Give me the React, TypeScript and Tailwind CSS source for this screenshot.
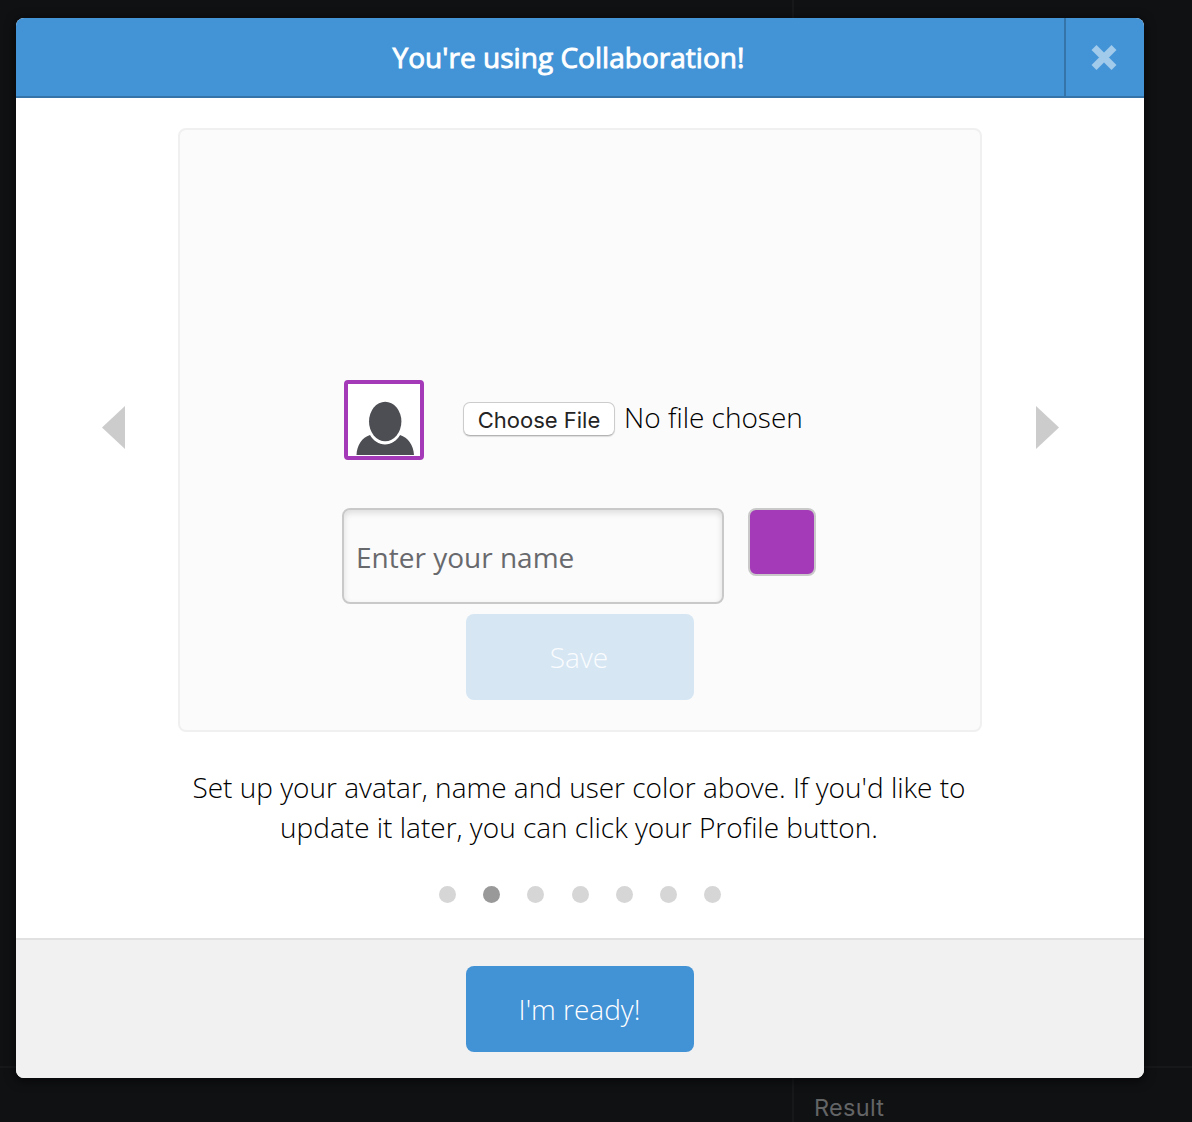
const dots = [0, 1, 2, 3, 4, 5, 6];

function Backdrop() {
  return (
    <div className="flex h-full flex-col">
      <div className="flex h-[1066px] shrink-0">
        <div className="w-[794px] border-r-2 border-[#17181a]" />
      </div>
      <div className="flex grow border-t-2 border-[#17181a]">
        <div className="w-[794px] border-r-2 border-[#17181a]" />
        <div className="pl-5 pt-[25px] font-['Inter',sans-serif] text-[23.5px] leading-[30px] tracking-[0.3px] text-[#636465]">
          Result
        </div>
      </div>
    </div>
  );
}

function Header() {
  return (
    <header className="flex h-20 border-b-2 border-[#3474a9] bg-[#4394d7]">
      <h1 className="flex grow items-center justify-center whitespace-nowrap pl-[57px] text-[28px] tracking-[0.03px] text-white [-webkit-text-stroke:0.9px_white]">
        You're using Collaboration!
      </h1>
      <button aria-label="Close" className="flex w-20 items-center justify-center border-l-2 border-[#3474a9] pr-0.5">
        <svg width="26" height="26" viewBox="0 0 26 26" className="text-[#a1caeb]" fill="none" stroke="currentColor" strokeWidth="7">
          <path d="M3 3.500L23 23.500M23 3.500L3 23.500" />
        </svg>
      </button>
    </header>
  );
}

function Avatar() {
  return (
    <div className="h-20 w-20 rounded-[4px] border-4 border-[#a43ab8] bg-white">
      <svg width="72" height="72" viewBox="0 0 72 72" fill="#4d4e53">
        <path d="M8.500 71C9 61 14 53.500 22 51C25 56.500 31 60.500 37 60.500S49 56.500 52 51C60 53.500 65.500 61 66 71Z" />
        <ellipse cx="37.200" cy="37.500" rx="18.200" ry="22.500" fill="white" />
        <ellipse cx="37.200" cy="37.500" rx="16.200" ry="19.800" />
      </svg>
    </div>
  );
}

function ProfileForm() {
  return (
    <section className="ml-[52px] mr-auto mt-[30px] h-[604px] w-[804px] rounded-lg border-2 border-[#f0f0f0] bg-[#fbfbfb] pl-[162px] pt-[250px]">
      <div className="flex pl-[2px]">
        <Avatar />
        <div className="ml-[39px] flex h-[80px] items-start pt-[22px]">
          <button className="h-[34px] w-[152px] whitespace-nowrap rounded-[7px] border border-[#cccccc] border-b-[#b4b4b4] bg-white font-['Inter',sans-serif] text-[22px] leading-[34px] tracking-[0px] text-[#242424] shadow-[0_1px_1px_rgba(0,0,0,0.12)]">
            Choose File
          </button>
          <span className="ml-[9px] -mt-[5px] whitespace-nowrap text-[28px] font-light leading-[40px] text-black">
            No file chosen
          </span>
        </div>
      </div>
      <div className="mt-12 flex items-start gap-6">
        <input
          placeholder="Enter your name"
          className="h-24 w-[382px] rounded-lg border-2 border-[#c9c9c9] bg-[#fbfbfb] px-3 pt-0.5 text-[28px] shadow-[inset_0_3px_6px_rgba(0,0,0,0.12)] outline-none placeholder:text-[#68696d]"
        />
        <div className="h-[68px] w-[68px] rounded-lg border-2 border-[#c9c9c9] bg-[#a43ab8]" />
      </div>
      <button className="ml-[124px] mt-[10px] block h-[86px] w-[228px] rounded-lg bg-[#d6e6f3] pr-0.5 text-[28px] font-light text-[#fafcfe]">
        Save
      </button>
    </section>
  );
}

export default function App() {
  return (
    <div className="relative h-[1122px] w-[1192px] overflow-hidden bg-[#101113] font-['Open_Sans',sans-serif]">
      <Backdrop />
      <main className="absolute left-4 top-[18px] flex h-[1060px] w-[1128px] flex-col overflow-hidden rounded-lg bg-white shadow-[0_2px_10px_2px_rgba(0,0,0,0.5)]">
        <Header />
        <div className="flex items-center pl-[86px] pr-[85px]">
          <svg width="24" height="44" viewBox="0 0 24 44" fill="#cccccc" className="mt-[26px]">
            <path d="M23 0V43L0 21.500Z" />
          </svg>
          <ProfileForm />
          <svg width="24" height="44" viewBox="0 0 24 44" fill="#cccccc" className="mt-[26px]">
            <path d="M1 0V43L24 21.500Z" />
          </svg>
        </div>
        <p className="mt-[35px] whitespace-nowrap pr-0.5 text-center text-[28px] font-light leading-10 text-black">
          Set up your avatar, name and user color above. If you'd like to
          <br />
          update it later, you can click your Profile button.
        </p>
        <div className="mt-[39px] flex justify-center gap-[27.2px]">
          {dots.map((i) => (
            <span key={i} className={i === 1 ? "size-[17px] rounded-full bg-[#999999]" : "size-[17px] rounded-full bg-[#d6d6d6]"} />
          ))}
        </div>
        <footer className="mt-auto flex h-[140px] justify-center border-t-2 border-[#e1e1e1] bg-[#f1f1f1] pt-[26px]">
          <button className="h-[86px] w-[228px] rounded-lg bg-[#4292d6] pr-px text-[28px] font-light text-white">I'm ready!</button>
        </footer>
      </main>
    </div>
  );
}
